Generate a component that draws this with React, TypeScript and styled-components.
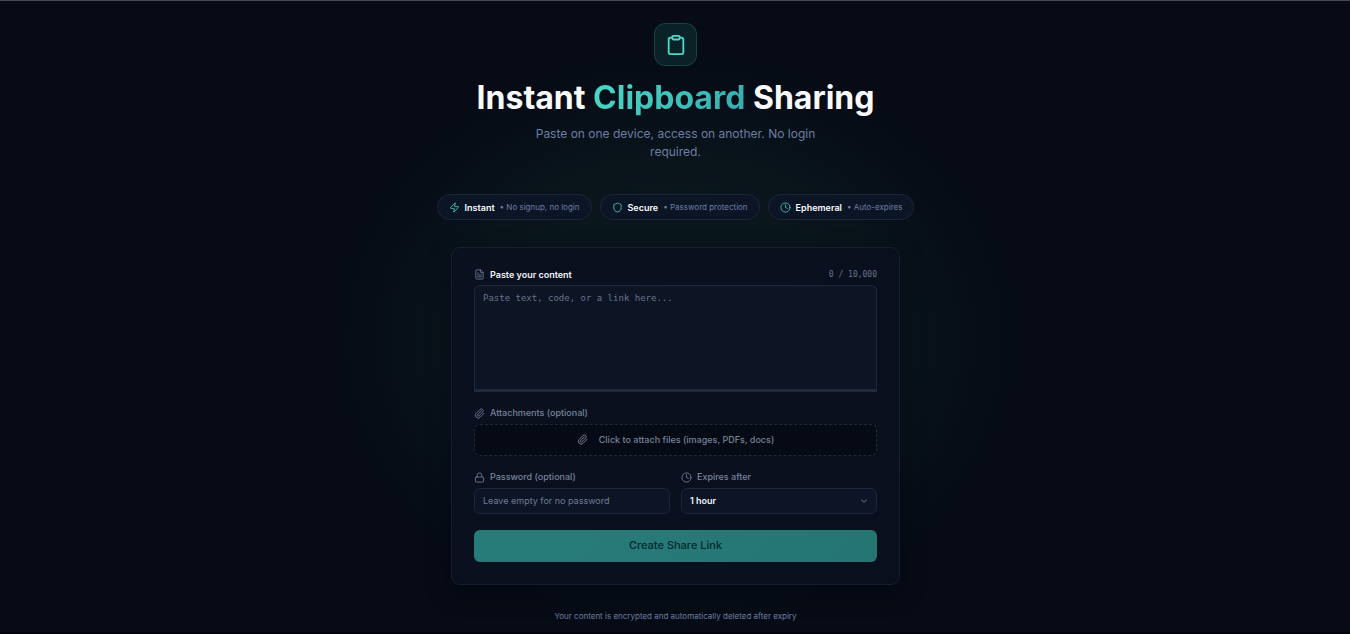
import React, { useState } from "react";
import styled, { createGlobalStyle } from "styled-components";
import { ChevronDown, Clipboard, Clock, FileText, Lock, Paperclip, Shield, Zap } from "lucide-react";

const GlobalStyle = createGlobalStyle`
  * { box-sizing: border-box; }
  body {
    margin: 0;
    background: #060b15;
    font-family: Inter, "Liberation Sans", sans-serif;
    color: #f8fafc;
  }
  button, input, select, textarea { font-family: inherit; margin: 0; }
`;

const mono = `"DejaVu Sans Mono", "Liberation Mono", monospace`;

const Page = styled.main`
  min-height: 100vh;
  display: flex;
  flex-direction: column;
  align-items: center;
  padding: 22px 15px 8px 16px;
  border-top: 1px solid #484a54;
  border-bottom: 2px solid #01040b;
  background: radial-gradient(ellipse 350px 290px at 50% 338px, #0a191e 0%, #09161c 50%, #08121a 70%, #070d17 88%, #060b15 100%);
`;

const Header = styled.header`
  display: flex;
  flex-direction: column;
  align-items: center;
  text-align: center;
`;

const Logo = styled.div`
  width: 43px;
  height: 43px;
  display: grid;
  place-items: center;
  border: 1px solid #164446;
  border-radius: 11px;
  background: #0a2127;
  color: #4fd8c8;
`;

const Title = styled.h1`
  margin: 12px 0 0;
  font-size: 32px;
  line-height: 40px;
  font-weight: 700;
`;

const Accent = styled.span`
  background: linear-gradient(135deg, #4bdcc8, #36a9ac);
  background-clip: text;
  color: transparent;
`;

const Subtitle = styled.p`
  max-width: 320px;
  margin: 7px 0 0;
  font-size: 12px;
  line-height: 18px;
  color: #6b7fa3;
`;

const Features = styled.ul`
  display: flex;
  flex-wrap: wrap;
  justify-content: center;
  gap: 8px;
  margin: 33px 0 27px;
  padding: 0;
  list-style: none;
`;

const Feature = styled.li`
  display: flex;
  align-items: center;
  gap: 5px;
  height: 26px;
  padding: 0 11px;
  border: 1px solid #1a2638;
  border-radius: 13px;
  background: #0c1526;
  font-size: 9px;
  font-weight: 600;
  svg { color: #3fbfb2; }
`;

const Detail = styled.span`
  font-size: 8px;
  font-weight: 400;
  color: #6b7fa3;
`;

const Card = styled.form`
  width: 100%;
  max-width: 449px;
  display: flex;
  flex-direction: column;
  gap: 16px;
  padding: 22px;
  border: 1px solid #151e2e;
  border-radius: 9px;
  background: linear-gradient(135deg, #0b101f, #090f1c);
  box-shadow: 0 8px 24px rgba(1, 5, 12, 0.4);
`;

const Field = styled.div`
  display: flex;
  flex-direction: column;
  gap: 6px;
  min-width: 0;
`;

const FieldHead = styled.div`
  display: flex;
  justify-content: space-between;
  align-items: center;
  height: 9px;
`;

const Label = styled.label<{ $strong?: boolean }>`
  display: flex;
  align-items: center;
  gap: 5px;
  height: 10px;
  font-size: 9px;
  line-height: 10px;
  font-weight: ${(p) => (p.$strong ? 600 : 500)};
  color: ${(p) => (p.$strong ? "#f1f5f9" : "#76849b")};
  svg { color: #6b788e; }
`;

const Counter = styled.span`
  font-family: ${mono};
  font-size: 8px;
  line-height: 10px;
  color: #66748a;
`;

const Editor = styled.textarea`
  display: block;
  width: 100%;
  height: 107px;
  padding: 6px 8px;
  border: 1px solid #1c2739;
  border-bottom: 3px solid #202a3a;
  border-radius: 6px 6px 1px 1px;
  outline: none;
  resize: none;
  background: #0d1525;
  color: #f1f5f9;
  && { font-family: ${mono}; }
  font-size: 9px;
  line-height: 13px;
  &::placeholder { color: #66748a; }
`;

const DropZone = styled.button`
  display: flex;
  align-items: center;
  justify-content: center;
  gap: 11px;
  height: 32px;
  padding: 0 8px 2px;
  border: 1px dashed #202a39;
  border-radius: 6px;
  background: #050a14;
  color: #76849b;
  font-size: 9px;
  font-weight: 500;
`;

const Columns = styled.div`
  display: grid;
  grid-template-columns: 1fr 1fr;
  gap: 11px;
`;

const Input = styled.input`
  width: 100%;
  height: 26px;
  padding: 0 8px 2px;
  border: 1px solid #1c2739;
  border-radius: 6px;
  outline: none;
  background: #0c1425;
  color: #f1f5f9;
  font-size: 9px;
  &::placeholder { color: #6f7d94; }
`;

const SelectBox = styled.div`
  display: grid;
  align-items: center;
  > * { grid-area: 1 / 1; }
  svg {
    justify-self: end;
    margin-right: 8px;
    color: #8491a3;
    pointer-events: none;
  }
`;

const Select = styled.select`
  width: 100%;
  height: 26px;
  padding: 0 8px 2px;
  border: 1px solid #1c2739;
  border-radius: 6px;
  outline: none;
  appearance: none;
  background: #0c1425;
  color: #f1f5f9;
  font-size: 9px;
  font-weight: 600;
`;

const Submit = styled.button`
  height: 32px;
  padding: 0 8px 2px;
  border: 0;
  border-radius: 6px;
  background: linear-gradient(135deg, #277c79, #257673);
  color: #04282f;
  font-size: 11px;
  font-weight: 500;
`;

const Footer = styled.footer`
  margin-top: 25px;
  font-size: 8px;
  line-height: 12px;
  color: #6b7fa3;
`;

const features = [
  { icon: Zap, name: "Instant", detail: "No signup, no login" },
  { icon: Shield, name: "Secure", detail: "Password protection" },
  { icon: Clock, name: "Ephemeral", detail: "Auto-expires" },
];

export default function App() {
  const [content, setContent] = useState("");

  return (
    <Page>
      <GlobalStyle />
      <Header>
        <Logo><Clipboard size={22} /></Logo>
        <Title>Instant <Accent>Clipboard</Accent> Sharing</Title>
        <Subtitle>Paste on one device, access on another. No login required.</Subtitle>
      </Header>
      <Features>
        {features.map(({ icon: Icon, name, detail }) => (
          <Feature key={name}>
            <Icon size={11} />
            <span>{name}</span>
            <Detail>• {detail}</Detail>
          </Feature>
        ))}
      </Features>
      <Card onSubmit={(e) => e.preventDefault()}>
        <Field>
          <FieldHead>
            <Label $strong htmlFor="content"><FileText size={11} />Paste your content</Label>
            <Counter>{content.length} / 10,000</Counter>
          </FieldHead>
          <Editor
            id="content"
            maxLength={10000}
            placeholder="Paste text, code, or a link here..."
            value={content}
            onChange={(e) => setContent(e.target.value)}
          />
        </Field>
        <Field>
          <Label htmlFor="attach"><Paperclip size={11} />Attachments (optional)</Label>
          <DropZone id="attach" type="button">
            <Paperclip size={11} />
            Click to attach files (images, PDFs, docs)
          </DropZone>
        </Field>
        <Columns>
          <Field>
            <Label htmlFor="password"><Lock size={11} />Password (optional)</Label>
            <Input id="password" type="password" placeholder="Leave empty for no password" />
          </Field>
          <Field>
            <Label htmlFor="expiry"><Clock size={11} />Expires after</Label>
            <SelectBox>
              <Select id="expiry" defaultValue="1h">
                <option value="1h">1 hour</option>
                <option value="1d">1 day</option>
                <option value="7d">7 days</option>
              </Select>
              <ChevronDown size={10} />
            </SelectBox>
          </Field>
        </Columns>
        <Submit type="submit">Create Share Link</Submit>
      </Card>
      <Footer>Your content is encrypted and automatically deleted after expiry</Footer>
    </Page>
  );
}
